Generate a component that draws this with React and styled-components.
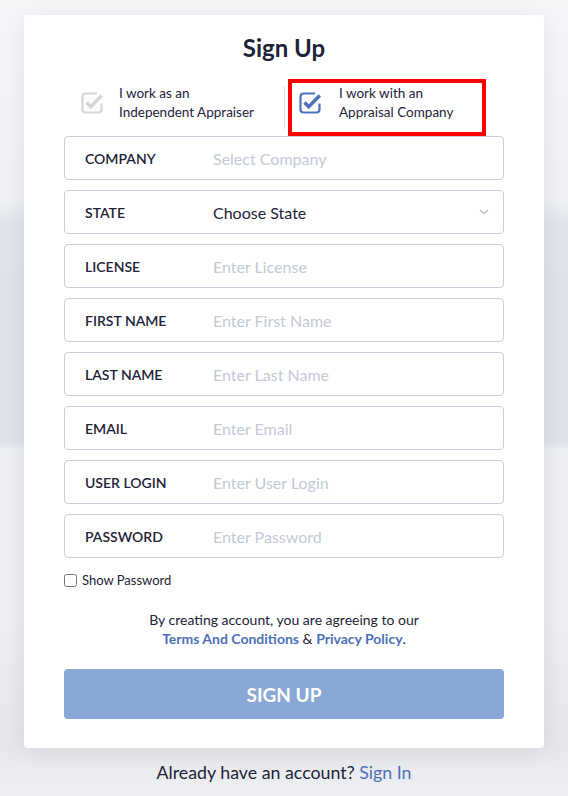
import React from 'react';
import styled, { createGlobalStyle } from 'styled-components';
import { FiChevronDown } from 'react-icons/fi';

const GlobalStyle = createGlobalStyle`
  html, body {
    margin: 0;
    padding: 0;
  }

  body {
    font-family: Lato, "Open Sans", sans-serif;
    color: #1d2338;
    min-height: 796px;
    background:
      linear-gradient(180deg,
        #f5f6f8 0px,
        #eef0f3 200px,
        #e2e5ec 225px,
        #dfe2ea 300px,
        #dfe2ea 440px,
        #eceef2 450px,
        #eeeff2 600px,
        #e6e7ea 740px,
        #eeeff2 796px);
  }
`;

const Page = styled.div`
  display: flex;
  flex-direction: column;
  align-items: center;
  padding-top: 15px;
`;

const Card = styled.div`
  width: 520px;
  box-sizing: border-box;
  background: #fff;
  border-radius: 4px;
  box-shadow: 0 4px 22px rgba(20, 30, 60, 0.08);
  padding: 19px 40px 29px;
  display: flex;
  flex-direction: column;
`;

const Title = styled.h1`
  margin: 0;
  text-align: center;
  font-size: 24px;
  font-weight: 700;
  line-height: 28px;
  color: #1d2338;
`;

const Options = styled.div`
  display: flex;
  align-items: center;
  margin-top: 17px;
`;

const Option = styled.label`
  display: flex;
  align-items: center;
  gap: ${(p) => (p.active ? '17px' : '15px')};
  width: ${(p) => (p.active ? '198px' : '220px')};
  height: 57px;
  box-sizing: border-box;
  padding: 0 ${(p) => (p.active ? '6px' : '16px')} 10px;
  border: 4px solid ${(p) => (p.active ? '#ff0000' : 'transparent')};
  border-width: ${(p) => (p.active ? '4px' : '0')};
  font-size: 13.5px;
  line-height: 19px;
  color: #1d2338;
  cursor: pointer;
`;

const Divider = styled.div`
  width: 1px;
  height: 43px;
  background: #dcdfe6;
  margin-right: 3px;
`;

const Form = styled.div`
  display: flex;
  flex-direction: column;
  gap: 10px;
`;

const Field = styled.label`
  display: flex;
  align-items: center;
  height: 44px;
  box-sizing: border-box;
  border: 1px solid #c9cfdc;
  border-radius: 4px;
  padding: 0 12px 0 20px;
`;

const FieldLabel = styled.span`
  width: 128px;
  flex-shrink: 0;
  font-size: 14px;
  font-weight: 600;
  text-transform: uppercase;
  color: #1d2338;
`;

const Input = styled.input`
  flex: 1;
  border: 0;
  outline: none;
  padding: 0;
  font-family: Lato, sans-serif;
  font-size: 16px;
  color: #1d2338;
  background: transparent;

  &::placeholder {
    color: #c3c9d6;
  }
`;

const SelectValue = styled.span`
  flex: 1;
  font-size: 16px;
  color: #1d2338;
`;

const ShowRow = styled.label`
  display: flex;
  align-items: center;
  gap: 5px;
  margin-top: 14px;
  font-size: 13px;
  color: #1d2338;

  input {
    margin: 0;
    width: 13px;
    height: 13px;
  }
`;

const Agreement = styled.p`
  margin: 22px 0 0;
  text-align: center;
  font-size: 14px;
  line-height: 19px;
  color: #1d2338;
`;

const Link = styled.a`
  color: #4c70b8;
  font-weight: ${(p) => (p.bold ? 700 : 400)};
  text-decoration: none;
`;

const Button = styled.button`
  margin-top: 21px;
  height: 50px;
  border: 0;
  border-radius: 4px;
  background: #8aa8d5;
  color: #fff;
  font-family: Lato, sans-serif;
  font-size: 19px;
  font-weight: 700;
  cursor: pointer;
`;

const Footer = styled.p`
  margin: 12px 0 0;
  font-size: 17.8px;
  line-height: 24px;
  color: #1d2338;
`;

function CheckIcon({ color }) {
  return (
    <svg width="24" height="24" viewBox="0 0 24 24">
      <path
        d="M17 2.5H5.5A3 3 0 0 0 2.5 5.5v13a3 3 0 0 0 3 3h13a3 3 0 0 0 3-3v-6"
        fill="none"
        stroke={color}
        strokeWidth="2.2"
      />
      <path
        d="M6.5 11.5l4.2 4.2L21.8 4.6"
        fill="none"
        stroke={color}
        strokeWidth="3.6"
        strokeLinejoin="miter"
      />
    </svg>
  );
}

const fields = [
  { label: 'Company', placeholder: 'Select Company' },
  { label: 'State', select: true },
  { label: 'License', placeholder: 'Enter License' },
  { label: 'First Name', placeholder: 'Enter First Name' },
  { label: 'Last Name', placeholder: 'Enter Last Name' },
  { label: 'Email', placeholder: 'Enter Email' },
  { label: 'User Login', placeholder: 'Enter User Login' },
  { label: 'Password', placeholder: 'Enter Password', type: 'password' },
];

export default function App() {
  return (
    <Page>
      <GlobalStyle />
      <Card>
        <Title>Sign Up</Title>

        <Options>
          <Option>
            <CheckIcon color="#d6d6d6" />
            <span>
              I work as an
              <br />
              Independent Appraiser
            </span>
          </Option>
          <Divider />
          <Option active>
            <CheckIcon color="#4d72bd" />
            <span>
              I work with an
              <br />
              Appraisal Company
            </span>
          </Option>
        </Options>

        <Form>
          {fields.map((f) => (
            <Field key={f.label}>
              <FieldLabel>{f.label}</FieldLabel>
              {f.select ? (
                <>
                  <SelectValue>Choose State</SelectValue>
                  <FiChevronDown size={14} color="#b7bdc9" />
                </>
              ) : (
                <Input type={f.type || 'text'} placeholder={f.placeholder} />
              )}
            </Field>
          ))}
        </Form>

        <ShowRow>
          <input type="checkbox" />
          Show Password
        </ShowRow>

        <Agreement>
          By creating account, you are agreeing to our
          <br />
          <Link bold href="#">Terms And Conditions</Link> &amp;{' '}
          <Link bold href="#">Privacy Policy</Link>.
        </Agreement>

        <Button>SIGN UP</Button>
      </Card>

      <Footer>
        Already have an account? <Link href="#">Sign In</Link>
      </Footer>
    </Page>
  );
}
